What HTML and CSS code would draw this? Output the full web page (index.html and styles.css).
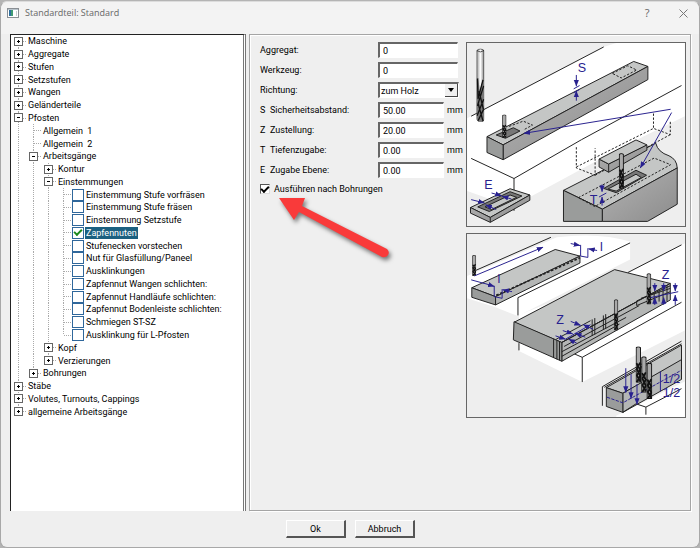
FILE: index.html
```html
<!DOCTYPE html>
<html lang="de">

<head>
    <meta charset="UTF-8">
    <meta name="viewport" content="width=device-width, initial-scale=1.0">
    <title>Standardteil: Standard</title>
    <link rel="stylesheet" href="styles.css">
</head>

<body>
    <div class="window">
        <header class="titlebar">
            <svg class="app-icon" viewBox="0 0 12 10" aria-hidden="true">
                <rect x="0.5" y="0.5" width="11" height="9" fill="#fff" stroke="#8a8f94"/>
                <rect x="1" y="1" width="10" height="1" fill="#b9c4cc"/>
                <rect x="2" y="2" width="2" height="6" fill="#2f6f9f"/>
                <rect x="4" y="2" width="2" height="6" fill="#3f9a72"/>
                <rect x="9" y="3" width="1" height="5" fill="#c8cdd2"/>
            </svg>
            <h1>Standardteil: Standard</h1>
            <button class="title-button" aria-label="Hilfe">?</button>
            <button class="title-button" aria-label="Schließen">
                <svg width="9" height="9" viewBox="0 0 9 9"><path d="M0.5 0.5l8 8M8.5 0.5l-8 8" stroke="#777" fill="none"/></svg>
            </button>
        </header>

        <main class="content">
            <nav class="tree-panel">
                <ul class="tree">
                    <li><button class="toggle first" aria-label="Öffnen"></button><span>Maschine</span></li>
                    <li><button class="toggle" aria-label="Öffnen"></button><span>Aggregate</span></li>
                    <li><button class="toggle" aria-label="Öffnen"></button><span>Stufen</span></li>
                    <li><button class="toggle" aria-label="Öffnen"></button><span>Setzstufen</span></li>
                    <li><button class="toggle" aria-label="Öffnen"></button><span>Wangen</span></li>
                    <li><button class="toggle" aria-label="Öffnen"></button><span>Geländerteile</span></li>
                    <li><button class="toggle open" aria-label="Schließen"></button><span>Pfosten</span></li>
                    <li><i class="line"></i><i class="line branch"></i><span>Allgemein&nbsp; 1</span></li>
                    <li><i class="line"></i><i class="line branch"></i><span>Allgemein&nbsp; 2</span></li>
                    <li><i class="line"></i><button class="toggle open" aria-label="Schließen"></button><span>Arbeitsgänge</span></li>
                    <li><i class="line"></i><i class="line"></i><button class="toggle" aria-label="Öffnen"></button><span>Kontur</span></li>
                    <li><i class="line"></i><i class="line"></i><button class="toggle open" aria-label="Schließen"></button><span>Einstemmungen</span></li>
                    <li><i class="line"></i><i class="line"></i><i class="line"></i><i class="line branch"></i><label><input type="checkbox"><span>Einstemmung Stufe vorfräsen</span></label></li>
                    <li><i class="line"></i><i class="line"></i><i class="line"></i><i class="line branch"></i><label><input type="checkbox"><span>Einstemmung Stufe fräsen</span></label></li>
                    <li><i class="line"></i><i class="line"></i><i class="line"></i><i class="line branch"></i><label><input type="checkbox"><span>Einstemmung Setzstufe</span></label></li>
                    <li><i class="line"></i><i class="line"></i><i class="line"></i><i class="line branch"></i><label><input type="checkbox" checked><span class="selected">Zapfennuten</span></label></li>
                    <li><i class="line"></i><i class="line"></i><i class="line"></i><i class="line branch"></i><label><input type="checkbox"><span>Stufenecken vorstechen</span></label></li>
                    <li><i class="line"></i><i class="line"></i><i class="line"></i><i class="line branch"></i><label><input type="checkbox"><span>Nut für Glasfüllung/Paneel</span></label></li>
                    <li><i class="line"></i><i class="line"></i><i class="line"></i><i class="line branch"></i><label><input type="checkbox"><span>Ausklinkungen</span></label></li>
                    <li><i class="line"></i><i class="line"></i><i class="line"></i><i class="line branch"></i><label><input type="checkbox"><span>Zapfennut Wangen schlichten:</span></label></li>
                    <li><i class="line"></i><i class="line"></i><i class="line"></i><i class="line branch"></i><label><input type="checkbox"><span>Zapfennut Handläufe schlichten:</span></label></li>
                    <li><i class="line"></i><i class="line"></i><i class="line"></i><i class="line branch"></i><label><input type="checkbox"><span>Zapfennut Bodenleiste schlichten:</span></label></li>
                    <li><i class="line"></i><i class="line"></i><i class="line"></i><i class="line branch"></i><label><input type="checkbox"><span>Schmiegen ST-SZ</span></label></li>
                    <li><i class="line"></i><i class="line"></i><i class="line"></i><i class="line branch last"></i><label><input type="checkbox"><span>Ausklinkung für L-Pfosten</span></label></li>
                    <li><i class="line"></i><i class="line"></i><button class="toggle" aria-label="Öffnen"></button><span>Kopf</span></li>
                    <li><i class="line"></i><i class="line"></i><button class="toggle last" aria-label="Öffnen"></button><span>Verzierungen</span></li>
                    <li><i class="line"></i><button class="toggle last" aria-label="Öffnen"></button><span>Bohrungen</span></li>
                    <li><button class="toggle" aria-label="Öffnen"></button><span>Stäbe</span></li>
                    <li><button class="toggle" aria-label="Öffnen"></button><span>Volutes, Turnouts, Cappings</span></li>
                    <li><button class="toggle last" aria-label="Öffnen"></button><span>allgemeine Arbeitsgänge</span></li>
                </ul>
            </nav>

            <section class="settings">
                <form class="fields">
                    <div class="field"><label for="aggregat">Aggregat:</label><input type="text" id="aggregat" class="wide" value="0"></div>
                    <div class="field"><label for="werkzeug">Werkzeug:</label><input type="text" id="werkzeug" class="wide" value="0"></div>
                    <div class="field">
                        <label for="richtung">Richtung:</label>
                        <div class="combo">
                            <select id="richtung"><option>zum Holz</option></select>
                            <span class="combo-arrow"></span>
                        </div>
                    </div>
                    <div class="field"><label for="sicherheit"><b>S</b>Sicherheitsabstand:</label><input type="text" id="sicherheit" value="50.00"><span>mm</span></div>
                    <div class="field"><label for="zustellung"><b>Z</b>Zustellung:</label><input type="text" id="zustellung" value="20.00"><span>mm</span></div>
                    <div class="field"><label for="tiefe"><b>T</b>Tiefenzugabe:</label><input type="text" id="tiefe" value="0.00"><span>mm</span></div>
                    <div class="field"><label for="ebene"><b>E</b>Zugabe Ebene:</label><input type="text" id="ebene" value="0.00"><span>mm</span></div>
                    <label class="check"><input type="checkbox" checked>Ausführen nach Bohrungen</label>
                </form>

                <div class="pictures">
                    <!-- mortise in post and rail -->
                    <svg class="picture" viewBox="18 21 660 555" role="img" aria-label="Zapfennut">
                        <defs>
                            <linearGradient id="shank">
                                <stop offset="0" stop-color="#999"/>
                                <stop offset="0.5" stop-color="#fff"/>
                                <stop offset="1" stop-color="#888"/>
                            </linearGradient>
                            <linearGradient id="side" x1="0" y1="0" x2="1" y2="1">
                                <stop offset="0" stop-color="#b4b4b4"/>
                                <stop offset="1" stop-color="#8c8c8c"/>
                            </linearGradient>
                            <marker id="head" viewBox="0 0 18 14" refX="17" refY="7" markerWidth="20" markerHeight="18" markerUnits="userSpaceOnUse" orient="auto">
                                <path d="M0 0L18 7L0 14Z" fill="#28218f"/>
                            </marker>
                            <symbol id="mill" viewBox="0 0 24 220" preserveAspectRatio="none">
                                <path d="M1 6V212L6 219H20L23 212V6Q12 -4 1 6Z" fill="url(#shank)" stroke="#111" stroke-width="2"/>
                                <path d="M1 6Q12 14 23 6" fill="none" stroke="#111" stroke-width="2"/>
                                <path d="M1 92L6 88L10 128L20 90L23 92V212L18 219H8L1 208Z" fill="#777"/>
                                <path d="M3 90L5 150L20 94M3 172L22 112M8 128L21 182M2 202L22 152M5 164L20 218M5 217L22 182" fill="none" stroke="#111" stroke-width="4"/>
                            </symbol>
                            <symbol id="mill-small" viewBox="0 0 14 110" preserveAspectRatio="none">
                                <path d="M1 4V106H13V4Q7 -2 1 4Z" fill="#aaa" stroke="#111" stroke-width="3"/>
                                <path d="M2 50L12 70L3 86L12 104M12 48L3 66L12 88L3 106" fill="none" stroke="#111" stroke-width="5"/>
                            </symbol>
                        </defs>
                        <path class="paper" d="M18 249L432 33L470 21H678V243L500 330L172 508L80 492L18 470Z"/>
                        <path class="edge" d="M30 243L432 33M668 150L365 314L160 432V530M30 371L160 432"/>

                        <path class="top" d="M78 305L523 77L566 92L127 330Z"/>
                        <path class="side" d="M566 92V132L127 375V330Z"/>
                        <path class="front" d="M78 305L127 330V375L78 353Z"/>
                        <path class="dash" d="M458 113L505 90L532 103L485 127ZM145 274L188 258L216 270L188 285"/>
                        <path class="slot" d="M106 300L158 278L178 288L134 310Z"/>
                        <use href="#mill" x="46" y="38" width="24" height="222"/>
                        <use href="#mill-small" x="124" y="238" width="13" height="72"/>

                        <path class="top" d="M310 468L590 325Q596 352 630 363Q654 374 655 400L428 525Z"/>
                        <path class="front" d="M310 468L428 525V562H310Z"/>
                        <path class="side" d="M428 525L655 400V510L565 562H428Z"/>
                        <path class="dash" d="M355 490L585 370L635 390L405 517Z"/>
                        <path class="slot" d="M432 462L530 407L562 422L470 475Z"/>
                        <path class="top" d="M445 464L530 419L546 429L470 470Z"/>
                        <path class="dash" d="M349 337V400L406 422V340M349 397L583 280L634 299V255M583 235V280M634 299L406 422"/>
                        <path class="side" d="M418 373L447 388L563 330V346L447 413L418 397Z"/>
                        <path class="top" d="M418 373L530 315L563 330L447 388Z"/>
                        <path class="edge" d="M447 388V413"/>
                        <use href="#mill-small" x="478" y="355" width="15" height="110"/>

                        <path class="top" d="M28 520L148 463L208 482L88 550Z"/>
                        <path class="side" d="M28 520L88 550L208 482V498L88 565L28 537Z"/>
                        <path class="edge" d="M88 550V565"/>
                        <path class="slot" d="M50 518L148 472L184 485L85 532Z"/>
                        <path class="top" d="M72 518L148 482L168 489L92 526Z"/>

                        <g class="arrows">
                            <path d="M635 222L190 295"/>
                            <path d="M638 232L543 400"/>
                            <path d="M349 118V152"/>
                            <path d="M349 196V166"/>
                            <path d="M427 450V472"/>
                            <path d="M427 514V488"/>
                            <path d="M92 476L122 484"/>
                            <path d="M152 494L124 486"/>
                            <path d="M30 496L70 506"/>
                            <path d="M106 526L74 512"/>
                        </g>
                        <path class="mark" d="M341 160L359 150M341 172L359 162M418 488L440 476"/>
                        <text x="353" y="110">S</text>
                        <text x="70" y="463">E</text>
                        <text x="390" y="508">T</text>
                    </svg>

                    <!-- infeed and step distances -->
                    <svg class="picture" viewBox="18 15 660 555" role="img" aria-label="Zustellung">
                        <path class="paper" d="M18 142L290 25Q420 10 512 38V92L172 264L100 236L18 210Z"/>
                        <path class="paper" d="M505 132L678 43V308L367 464L175 370V260Z"/>
                        <path class="paper" d="M470 566L678 462V570H470Z"/>
                        <path class="edge" d="M38 128L272 25M512 42L172 208V262M668 48L505 132M668 222L367 389V464M305 362L367 389M175 346V368"/>

                        <path class="top" d="M32 178L285 62L360 82L104 205Z"/>
                        <path class="side light" d="M104 205L360 82V103L104 230Z"/>
                        <path class="front" d="M32 178L104 205V230L32 207Z"/>
                        <path class="edge thick" stroke-dasharray="8 5" d="M106 201L360 87"/>

                        <path class="top" d="M160 283L465 123L634 165L305 344Z"/>
                        <path class="side light" d="M305 344L634 165V215L305 401Z"/>
                        <path class="front" d="M160 281L305 344V401L158 336Z"/>
                        <path class="edge" d="M280 334V390M290 338V395M298 341V398M305 344L530 222M312 356L540 232M305 372L500 268M305 386L480 288M288 334L392 278M397 274V324M405 270V320M431 262V305M438 258V302M532 218V232L634 190M532 218L634 172M545 210L634 180M585 192V228M600 186V220M612 180V222M624 170V218"/>
                        <use href="#mill-small" x="33" y="79" width="12" height="64"/>
                        <use href="#mill-small" x="463" y="213" width="13" height="96"/>
                        <use href="#mill-small" x="562" y="134" width="14" height="96"/>

                        <path class="edge" d="M428 536V478L668 340M434 480L668 348"/>
                        <path class="top" d="M440 481L668 352V400L490 498Z"/>
                        <path class="side light" d="M490 498L668 396V456L490 556Z"/>
                        <path class="front" d="M440 481L490 498V556L440 538Z"/>
                        <path class="edge" d="M490 556L530 530L560 540V563M560 540L668 484"/>
                        <path class="mark" stroke-dasharray="10 4" d="M442 510L490 527L668 428"/>
                        <use href="#mill-small" x="529" y="356" width="16" height="112"/>
                        <use href="#mill-small" x="546" y="386" width="16" height="112"/>
                        <use href="#mill-small" x="562" y="406" width="17" height="112"/>

                        <g class="arrows">
                            <path d="M40 142L248 55"/>
                            <path d="M332 44L360 50"/>
                            <path d="M412 65L386 60"/>
                            <path d="M68 164L100 174"/>
                            <path d="M154 190L126 184"/>
                            <path d="M587 164V188"/>
                            <path d="M587 230V208"/>
                            <path d="M614 164V188"/>
                            <path d="M614 230V208"/>
                            <path d="M649 164V188"/>
                            <path d="M649 230V200"/>
                            <path d="M332 280L362 292"/>
                            <path d="M400 304L370 290"/>
                            <path d="M308 308L338 318"/>
                            <path d="M376 328L346 316"/>
                            <path d="M286 324L316 334"/>
                            <path d="M350 346L326 334"/>
                            <path d="M499 422V496"/>
                            <path d="M515 440V514"/>
                            <path d="M533 470V532"/>
                        </g>
                        <path class="mark" d="M30 154L70 165M100 172V205L124 210V182M362 48V82L384 86V58M604 432V492M574 208L658 190M316 334L392 290"/>
                        <text x="421" y="68">l</text>
                        <text x="110" y="164">l</text>
                        <text x="608" y="150">Z</text>
                        <text x="288" y="287">Z</text>
                        <text x="611" y="466">1/2</text>
                        <text x="611" y="508">1/2</text>
                    </svg>
                </div>

                <svg class="pointer" viewBox="0 0 130 70" aria-hidden="true">
                    <path d="M4 3H30L27 11L112 54Q115 57 113 60Q111 63 107 62L24 17L19 25Z" fill="#f93a3a"/>
                </svg>
            </section>
        </main>

        <footer class="actions">
            <button>Ok</button>
            <button>Abbruch</button>
        </footer>
    </div>
</body>
</html>
```

FILE: styles.css
```css
* {
    box-sizing: border-box;
}

body {
    margin: 0;
    padding-top: 1px;
    min-height: 100vh;
    display: flex;
    background-color: #b4b4b4;
    font-family: Roboto, "Liberation Sans", sans-serif;
    font-size: 9px;
    line-height: 12px;
    color: #000;
}

input,
select,
button {
    margin: 0;
    padding: 0;
    font: inherit;
    color: inherit;
}

.window {
    flex: 1;
    display: flex;
    flex-direction: column;
    padding: 0 8px 0 9px;
    background-color: #efefef;
    border: 1px solid #a8a8a8;
    border-top-color: #dcdcdc;
    border-radius: 7px;
}

/* title bar */
.titlebar {
    display: flex;
    align-items: center;
    height: 32px;
    padding: 0 8px 10px 6px;
    margin: 0 -8px 0 -9px;
    border-radius: 7px 7px 0 0;
    background-color: #f3f3f3;
    font-family: "Open Sans", sans-serif;
}

.app-icon {
    width: 12px;
    height: 10px;
}

.titlebar h1 {
    flex: 1;
    margin: 0 0 0 6px;
    font-size: 9px;
    font-weight: normal;
    color: #666;
}

.title-button {
    display: flex;
    align-items: center;
    justify-content: center;
    width: 16px;
    height: 16px;
    margin-left: 20px;
    border: none;
    background: none;
    font-size: 11px;
    color: #666;
}

.content {
    flex: 1;
    display: grid;
    grid-template-columns: 236px 1fr;
    gap: 3px;
}

/* tree */
.tree-panel {
    background-color: #fff;
    border-top: 1px solid #222;
    border-left: 1px solid #222;
    border-right: 3px double #777;
}

.tree {
    display: grid;
    grid-auto-rows: 1fr;
    height: 383px;
    margin: 0;
    padding: 0;
    list-style: none;
}

.tree li,
.tree label {
    display: flex;
    align-items: center;
    white-space: nowrap;
}

.tree span {
    padding: 0 1px;
}

.tree .selected {
    background-color: #1b6080;
    color: #fff;
}

.line,
.toggle {
    align-self: stretch;
    width: 15px;
    background: repeating-linear-gradient(#aaa 0 1px, transparent 1px 2px) 7px 0 / 1px 100% no-repeat;
}

.branch,
.toggle {
    background:
        repeating-linear-gradient(#aaa 0 1px, transparent 1px 2px) 7px 0 / 1px 100% no-repeat,
        repeating-linear-gradient(90deg, #aaa 0 1px, transparent 1px 2px) 100% 6px / 7px 1px no-repeat;
}

.branch.last,
.toggle.last {
    background-size: 1px 6px, 7px 1px;
}

.toggle.first {
    background-position: 7px 6px, 100% 6px;
}

.toggle {
    display: grid;
    place-items: center;
    margin-right: 1px;
    border: none;
}

.toggle::before {
    content: "";
    width: 7px;
    height: 7px;
    border: 1px solid #666;
    background:
        linear-gradient(#000, #000) center / 3px 1px no-repeat,
        linear-gradient(#000, #000) center / 1px 3px no-repeat,
        #fff;
}

.toggle.open::before {
    background: linear-gradient(#000, #000) center / 3px 1px no-repeat, #fff;
}

.branch + span {
    margin-left: 1px;
}

input[type="checkbox"] {
    display: grid;
    place-items: center;
    appearance: none;
    background-color: #fff;
}

input[type="checkbox"]:checked::before {
    content: "";
    width: 6px;
    height: 3px;
    margin-bottom: 2px;
    border: solid #000;
    border-width: 0 0 2px 2px;
    transform: rotate(-45deg);
}

.tree input {
    width: 12px;
    height: 12px;
    margin: 0 1px;
    border: 1px solid #2f679b;
}

.tree input:checked::before {
    border-color: #1d8a1d;
}

/* settings */
.settings {
    position: relative;
    display: flex;
    justify-content: space-between;
    align-items: flex-start;
    padding: 7px 4px 0 10px;
    border: 1px solid #a5a5a5;
    box-shadow: inset 1px 1px #fff, 1px 1px #fff;
}

.fields {
    display: flex;
    flex-direction: column;
    gap: 5px;
}

.field {
    display: grid;
    grid-template-columns: 118px 66px 15px;
    align-items: center;
    height: 15px;
}

.field b {
    display: inline-block;
    width: 10px;
    font-weight: normal;
}

.field input,
.combo {
    height: 16px;
    border: 1px solid #fff;
    border-top: 2px solid #666;
    border-left: 2px solid #666;
    background-color: #fff;
}

.field input {
    width: 100%;
    padding-left: 3px;
}

.field .wide {
    grid-column: 2 / 4;
    width: 80px;
}

.field span {
    padding-left: 3px;
}

.combo {
    grid-column: 2 / 4;
    display: grid;
    grid-template-columns: 1fr 13px;
}

.combo select {
    grid-area: 1 / 1 / 2 / 3;
    appearance: none;
    border: none;
    background: none;
    padding-left: 1px;
}

.field .combo-arrow {
    grid-area: 1 / 2;
    display: grid;
    place-items: center;
    padding: 0;
    background-color: #efefef;
    border-right: 1px solid #444;
    border-bottom: 1px solid #444;
    pointer-events: none;
}

.combo-arrow::before {
    content: "";
    border: 3px solid transparent;
    border-top: 4px solid #000;
    border-bottom: none;
}

.check {
    display: flex;
    align-items: center;
    gap: 4px;
    height: 14px;
}

.check input {
    width: 10px;
    height: 10px;
    border: 1px solid #ddd;
    border-top-color: #555;
    border-left-color: #555;
}

.pictures {
    display: grid;
    gap: 6px;
}

.picture {
    display: block;
    width: 220px;
    height: 185px;
    border: 1px solid #666;
    background-color: #eee;
    stroke-linejoin: round;
}

.picture text {
    fill: #28218f;
    font-family: "Liberation Sans", Arial, sans-serif;
    font-size: 38px;
}

.paper {
    fill: #fff;
}

.edge {
    fill: none;
    stroke: #222;
    stroke-width: 3;
}

.thick {
    stroke-width: 5;
}

.top,
.side,
.front,
.slot {
    fill: #c4c6c5;
    stroke: #222;
    stroke-width: 3;
}

.side {
    fill: url(#side);
}

.side.light {
    fill: #b4b6b5;
}

.front {
    fill: #9a9c9b;
}

.slot {
    fill: #777;
}

.dash {
    fill: none;
    stroke: #222;
    stroke-width: 3;
    stroke-dasharray: 7 5;
}

.mark,
.arrows path {
    fill: none;
    stroke: #28218f;
    stroke-width: 3;
}

.arrows path {
    marker-end: url(#head);
}

/* arrow lies over the form and points at the tick box */
.pointer {
    position: absolute;
    top: 160px;
    left: 25px;
    width: 130px;
    height: 70px;
    filter: drop-shadow(2px 3px 2px rgba(0, 0, 0, 0.5));
    pointer-events: none;
}

/* buttons */
.actions {
    display: flex;
    justify-content: center;
    gap: 9px;
    padding: 9px 0;
}

.actions button {
    width: 60px;
    height: 18px;
    background-color: #efefef;
    border: 1px solid #fff;
    border-right: 2px solid #555;
    border-bottom: 2px solid #555;
}
```
